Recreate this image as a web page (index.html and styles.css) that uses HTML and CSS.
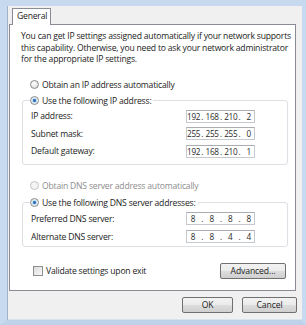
FILE: index.html
```html
<!DOCTYPE html>
<html>
<head>
<meta charset="utf-8">
<link rel="stylesheet" href="styles.css">
</head>
<body>
<div class="frame">
  <div class="tabs"><div class="tab">General</div></div>
  <div class="panel">
    <p class="intro">You can get IP settings assigned automatically if your network supports this capability. Otherwise, you need to ask your network administrator for the appropriate IP settings.</p>
    <div class="opt first"><span class="radio"></span><span>Obtain an IP address automatically</span></div>
    <fieldset class="group g1">
      <legend class="opt"><span class="radio on"></span><span>Use the following IP address:</span></legend>
      <div class="row"><span class="lbl">IP address:</span><span class="ip"><b>192</b><i>.</i><b>168</b><i>.</i><b>210</b><i>.</i><b>2</b></span></div>
      <div class="row"><span class="lbl">Subnet mask:</span><span class="ip"><b>255</b><i>.</i><b>255</b><i>.</i><b>255</b><i>.</i><b>0</b></span></div>
      <div class="row"><span class="lbl">Default gateway:</span><span class="ip"><b>192</b><i>.</i><b>168</b><i>.</i><b>210</b><i>.</i><b>1</b></span></div>
    </fieldset>
    <div class="opt dis"><span class="radio off"></span><span>Obtain DNS server address automatically</span></div>
    <fieldset class="group g2">
      <legend class="opt"><span class="radio on"></span><span>Use the following DNS server addresses:</span></legend>
      <div class="row r2"><span class="lbl">Preferred DNS server:</span><span class="ip"><b>8</b><i>.</i><b>8</b><i>.</i><b>8</b><i>.</i><b>8</b></span></div>
      <div class="row r2"><span class="lbl">Alternate DNS server:</span><span class="ip"><b>8</b><i>.</i><b>8</b><i>.</i><b>4</b><i>.</i><b>4</b></span></div>
    </fieldset>
    <div class="bottom">
      <div class="check"><span class="box"></span><span>Validate settings upon exit</span></div>
      <button class="btn adv">Advanced...</button>
    </div>
  </div>
  <div class="actions">
    <button class="btn ok">OK</button>
    <button class="btn cancel">Cancel</button>
  </div>
</div>
</body>
</html>
```
FILE: styles.css
```css
* { box-sizing: border-box; }
html, body { margin: 0; padding: 0; }
body {
  width: 306px;
  height: 325px;
  overflow: hidden;
  font-family: "Open Sans", "Noto Sans", sans-serif;
  font-size: 8.6px;
  letter-spacing: -0.2px;
  color: #222;
  background: #c9dbef;
}
.frame {
  width: 306px;
  height: 325px;
  border-top: 6px solid #c6d9ef;
  border-left: 7px solid #c7daef;
  border-right: 4px solid #c7daef;
  border-bottom: 5px solid #bfd2ea;
  background: #f0f0f0;
  box-shadow: inset 1px 0 0 #9fb3c9, inset 0 -1px 0 #d9e4f0;
}
.tabs {
  height: 18px;
  padding: 2px 0 0 5px;
  display: flex;
}
.tab {
  width: 39px;
  height: 17px;
  background: #fff;
  border: 1px solid #898c95;
  border-bottom: none;
  padding: 1px 0 0 4px;
  position: relative;
  z-index: 1;
  line-height: 13px;
}
.panel {
  margin-left: 2px;
  width: 287px;
  height: 267px;
  background: #fff;
  border: 1px solid #898c95;
  padding: 6px 0 0 11px;
}
.intro {
  margin: 0;
  line-height: 11.5px;
  width: 274px;
}
.opt {
  display: flex;
  align-items: center;
  height: 12px;
  line-height: 12px;
  gap: 3px;
}
.first { margin: 13px 0 0 9px; }
.radio {
  width: 9px;
  height: 9px;
  border-radius: 50%;
  border: 1px solid #8a8b8c;
  background: radial-gradient(circle at 40% 35%, #ffffff 0, #e6e6e6 60%, #cfcfcf 100%);
  flex: none;
}
.radio.on {
  background: radial-gradient(circle at 50% 50%, #2a5d92 0, #4a8fd0 30%, #bcd8f3 38%, #f4f4f4 70%, #d6d6d6 100%);
}
.radio.off {
  border-color: #c4c4c4;
  background: #f4f4f4;
}
.dis { color: #8d8d8d; margin: 15px 0 0 9px; }
.group {
  margin: 0 0 0 1px;
  width: 266px;
  border: 1px solid #dcdfe3;
  border-radius: 3px;
  padding: 1px 0 0 8px;
}
.g1 { margin-top: 4px; height: 70px; }
.g2 { margin-top: 5px; height: 50px; }
.group legend {
  padding: 0 2px 0 0;
  margin-left: -1px;
}
.row {
  display: flex;
  align-items: center;
  justify-content: space-between;
  height: 17.5px;
  padding-right: 32px;
}
.row.r2 { height: 18px; }
.lbl { flex: none; }
.ip {
  display: flex;
  flex: none;
  width: 69px;
  height: 13px;
  border: 1px solid #c5c8cc;
  border-top-color: #abadb3;
  background: #fff;
  padding: 0;
  align-items: center;
  line-height: 11px;
  font-size: 8.2px;
  color: #2a2a2a;
  letter-spacing: -0.3px;
}
.ip b { font-weight: normal; flex: none; width: 12px; text-align: center; }
.ip i { font-style: normal; flex: none; width: 6.6px; text-align: center; }
.bottom {
  display: flex;
  align-items: center;
  justify-content: space-between;
  margin-top: 16px;
  padding-right: 9px;
  padding-left: 12px;
}
.check { display: flex; align-items: center; gap: 3px; }
.box {
  width: 10px;
  height: 10px;
  border: 1px solid #8e8f8f;
  background: linear-gradient(135deg, #dcdcdc, #f8f8f8);
}
.btn {
  font-family: inherit;
  font-size: 8.6px;
  letter-spacing: -0.1px;
  color: #222;
  height: 16px;
  border: 1px solid #707070;
  border-radius: 2px;
  background: linear-gradient(#f2f2f2 0, #ebebeb 50%, #dddddd 51%, #cfcfcf 100%);
  padding: 0;
  line-height: 12px;
}
.adv { width: 66px; }
.actions {
  display: flex;
  justify-content: flex-end;
  gap: 9px;
  padding: 6px 0 0 0;
  width: 290px;
}
.ok { width: 51px; }
.cancel { width: 55px; }
```
